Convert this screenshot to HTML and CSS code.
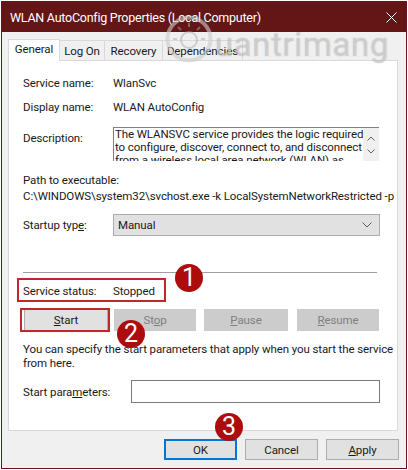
FILE: index.html
```html
<!DOCTYPE html>
<html lang="en">
<head>
    <meta charset="UTF-8">
    <title>WLAN AutoConfig Properties</title>
    <link rel="stylesheet" href="styles.css">
</head>
<body>
    <div class="window">
        <div class="titlebar">
            <span>WLAN AutoConfig Properties (Local Computer)</span>
            <svg class="close" width="11" height="11" viewBox="0 0 11 11"><path d="M0.5 0.5L10.5 10.5M10.5 0.5L0.5 10.5" stroke="#fff" stroke-width="1" fill="none"/></svg>
        </div>

        <div class="tabs">
            <div class="tab active">General</div>
            <div class="tab">Log On</div>
            <div class="tab">Recovery</div>
            <div class="tab">Dependencies</div>
        </div>

        <div class="panel">
            <div class="row name-row"><span class="label">Service name:</span><span>WlanSvc</span></div>
            <div class="row name-row"><span class="label">Display name:</span><span>WLAN AutoConfig</span></div>

            <div class="row desc-row">
                <span class="label">Description:</span>
                <div class="desc">
                    <p>The WLANSVC service provides the logic required<br>to configure, discover, connect to, and disconnect<br>from a wireless local area network (WLAN) as</p>
                    <div class="scroll">
                        <svg width="8" height="5" viewBox="0 0 8 5"><path d="M0.5 4.5L4 1L7.5 4.5" stroke="#606060" fill="none"/></svg>
                        <svg width="8" height="5" viewBox="0 0 8 5"><path d="M0.5 0.5L4 4L7.5 0.5" stroke="#606060" fill="none"/></svg>
                    </div>
                </div>
            </div>

            <div class="path-label">Path to executable:</div>
            <div class="path-value">C:\WINDOWS\system32\svchost.exe -k LocalSystemNetworkRestricted -p</div>

            <div class="row startup-row">
                <span class="label">Startup typ<u>e</u>:</span>
                <div class="select">
                    <span>Manual</span>
                    <svg width="10" height="6" viewBox="0 0 10 6"><path d="M0.5 0.5L5 5L9.5 0.5" stroke="#606060" fill="none"/></svg>
                </div>
            </div>

            <div class="separator"></div>

            <div class="row status-row"><span class="label">Service status:</span><span>Stopped</span></div>

            <div class="service-btns">
                <button class="btn start"><u>S</u>tart</button>
                <button class="btn off stop">St<u>o</u>p</button>
                <button class="btn off pause"><u>P</u>ause</button>
                <button class="btn off resume"><u>R</u>esume</button>
            </div>

            <p class="hint">You can specify the start parameters that apply when you start the service<br>from here.</p>

            <div class="row params-row">
                <span class="label">Start para<u>m</u>eters:</span>
                <div class="input"></div>
            </div>
        </div>

        <div class="footer">
            <button class="btn dlg ok">OK</button>
            <button class="btn dlg">Cancel</button>
            <button class="btn dlg"><u>A</u>pply</button>
        </div>

        <!-- overlays -->
        <div class="watermark">
            <svg width="48" height="48" viewBox="0 0 48 48">
                <circle cx="24" cy="24" r="21.5" fill="none" stroke="#ccc" stroke-opacity="0.6" stroke-width="4"/>
                <circle cx="24" cy="25" r="8" fill="none" stroke="#aaa" stroke-opacity="0.5" stroke-width="2"/>
                <path d="M24 8V12M13 12L16 15M35 12L32 15M8 24H12M40 24H36" stroke="#aaa" stroke-opacity="0.5" stroke-width="2"/>
            </svg>
            <span>uantrimang</span>
        </div>
        <div class="outline outline-status"></div>
        <div class="outline outline-start"></div>
        <div class="badge badge-1">1</div>
        <div class="badge badge-2">2</div>
        <div class="badge badge-3">3</div>
    </div>
</body>
</html>
```

FILE: styles.css
```css
* {
    margin: 0;
    padding: 0;
    box-sizing: border-box;
}

body {
    width: 408px;
    height: 470px;
    background: #fff;
    font-family: "Roboto", "Liberation Sans", sans-serif;
    font-size: 11.5px;
    letter-spacing: -0.1px;
    color: #1a1a1a;
    overflow: hidden;
}

.window {
    position: relative;
    width: 406px;
    height: 468px;
    margin: 1px;
    background: #f0f0f0;
    border: 1px solid #641616;
    display: flex;
    flex-direction: column;
}

.titlebar {
    height: 30px;
    background: #641616;
    color: #fff;
    font-size: 12.5px;
    letter-spacing: -0.25px;
    padding: 0 9px 0 8px;
    display: flex;
    align-items: center;
    justify-content: space-between;
    flex-shrink: 0;
}

/* Tabs */
.tabs {
    display: flex;
    height: 28px;
    padding: 7px 0 0 6px;
    align-items: flex-end;
    flex-shrink: 0;
}

.tab {
    height: 20px;
    background: #f0f0f0;
    border: 1px solid #d9d9d9;
    border-bottom: none;
    border-left: none;
    text-align: center;
    line-height: 21px;
}

.tab:nth-child(2) { width: 45px; }
.tab:nth-child(3) { width: 58px; }
.tab:nth-child(4) { width: 80px; }

.tab.active {
    width: 52px;
    height: 22px;
    background: #fff;
    border-left: 1px solid #d9d9d9;
    margin-bottom: -1px;
    line-height: 19px;
    position: relative;
    z-index: 1;
}

.panel {
    width: 390px;
    height: 371px;
    margin-left: 6px;
    background: #fff;
    border: 1px solid #d9d9d9;
    padding: 0 17px 0 14px;
    flex-shrink: 0;
}

.row {
    display: flex;
    align-items: center;
}

.label {
    width: 90px;
    flex-shrink: 0;
}

.name-row {
    height: 24px;
}

.name-row:first-child {
    margin-top: 10px;
}

.desc-row {
    align-items: flex-start;
    margin-top: 8px;
}

.desc-row .label {
    padding-top: 4px;
}

.desc {
    width: 266px;
    height: 34px;
    border-top: 1px solid #808080;
    border-left: 1px solid #808080;
    display: flex;
    overflow: hidden;
}

.desc p {
    width: 249px;
    padding: 0 0 0 1px;
    line-height: 13px;
    white-space: nowrap;
    flex-shrink: 0;
}

.scroll {
    flex: 1;
    background: #f0f0f0;
    display: flex;
    flex-direction: column;
    align-items: center;
    justify-content: center;
    gap: 8px;
}

.path-label {
    margin-top: 11px;
    line-height: 16px;
}

.path-value {
    line-height: 16px;
    white-space: nowrap;
}

.startup-row {
    margin-top: 10px;
}

.select {
    width: 267px;
    height: 22px;
    background: #e1e1e1;
    border: 1px solid #adadad;
    padding: 0 7px 0 4px;
    display: flex;
    align-items: center;
    justify-content: space-between;
}

.separator {
    height: 1px;
    background: #a0a0a0;
    margin-top: 36px;
    margin-right: 3px;
}

.status-row {
    height: 18px;
    margin-top: 9px;
}

/* Buttons */
.btn {
    font: inherit;
    letter-spacing: inherit;
    color: #1a1a1a;
    background: #e1e1e1;
    border: 1px solid #adadad;
    height: 22px;
}

.service-btns {
    display: flex;
    margin-top: 9px;
    margin-left: 1px;
}

.start { width: 84px; }
.off { background: #cccccc; border-color: #cccccc; color: #808080; }
.stop { width: 82px; margin-left: 6px; }
.pause { width: 84px; margin-left: 8px; }
.resume { width: 82px; margin-left: 9px; }

.hint {
    margin-top: 11px;
    line-height: 14px;
    white-space: nowrap;
}

.params-row {
    margin-top: 10px;
}

.params-row .label {
    width: 108px;
}

.input {
    width: 249px;
    height: 23px;
    background: #fff;
    border: 1px solid #7a7a7a;
}

.footer {
    display: flex;
    justify-content: flex-end;
    gap: 8px;
    padding: 8px 7px 0 0;
}

.dlg {
    width: 73px;
    height: 21px;
}

.ok {
    border: 2px solid #0078d7;
}

/* Overlays */
.watermark {
    position: absolute;
    left: 163px;
    top: 11px;
    display: flex;
    align-items: center;
    gap: 2px;
    color: rgba(255, 255, 255, 0.45);
    text-shadow: 0 0 1px rgba(110, 110, 110, 0.6);
    font-size: 33px;
    letter-spacing: 0.6px;
    pointer-events: none;
    z-index: 2;
}

.watermark span {
    margin-top: 12px;
}

.outline {
    position: absolute;
    border: 2px solid #c0272d;
}

.outline-status {
    left: 15px;
    top: 276px;
    width: 149px;
    height: 24px;
}

.outline-start {
    left: 18px;
    top: 306px;
    width: 90px;
    height: 24px;
}

.badge {
    position: absolute;
    width: 28px;
    height: 28px;
    border-radius: 50%;
    background: #ae0c0c;
    color: #fff;
    font-size: 25px;
    letter-spacing: 0;
    line-height: 28px;
    text-align: center;
    z-index: 3;
}

.badge-1 { left: 173px; top: 262px; }
.badge-2 { left: 115px; top: 318px; }
.badge-3 { left: 213px; top: 411px; }
```
